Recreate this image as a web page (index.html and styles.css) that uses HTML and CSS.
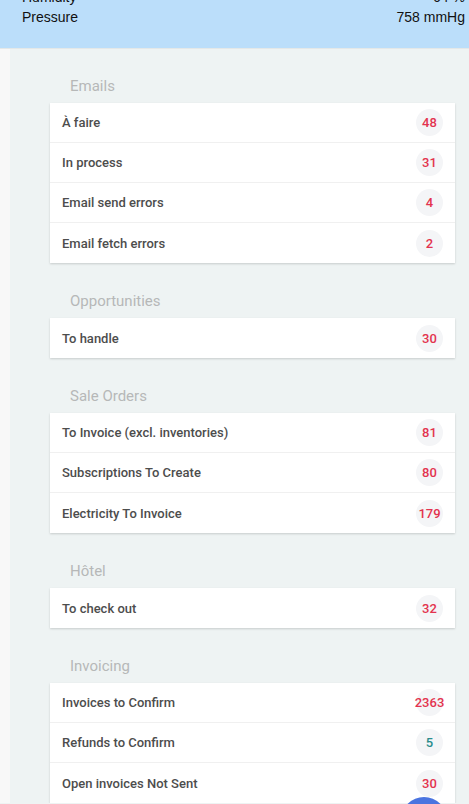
FILE: index.html
```html
<!DOCTYPE html>
<html lang="en">
<head>
  <meta charset="UTF-8" />
  <meta name="viewport" content="width=device-width, initial-scale=1.0" />
  <title>Dashboard</title>
  <link rel="stylesheet" href="styles.css">
</head>
<body>
  <div class="weather">
    <div class="weather-row first"><span>Humidity</span><span>64 %</span></div>
    <div class="weather-row"><span>Pressure</span><span>758 mmHg</span></div>
  </div>

  <div class="page">
    <div class="side"></div>
    <div class="main">
      <div class="section-title">Emails</div>
      <ul class="card">
        <li><span>À faire</span><span class="badge">48</span></li>
        <li><span>In process</span><span class="badge">31</span></li>
        <li><span>Email send errors</span><span class="badge">4</span></li>
        <li><span>Email fetch errors</span><span class="badge">2</span></li>
      </ul>

      <div class="section-title">Opportunities</div>
      <ul class="card">
        <li><span>To handle</span><span class="badge">30</span></li>
      </ul>

      <div class="section-title">Sale Orders</div>
      <ul class="card">
        <li><span>To Invoice (excl. inventories)</span><span class="badge">81</span></li>
        <li><span>Subscriptions To Create</span><span class="badge">80</span></li>
        <li><span>Electricity To Invoice</span><span class="badge">179</span></li>
      </ul>

      <div class="section-title">Hôtel</div>
      <ul class="card">
        <li><span>To check out</span><span class="badge">32</span></li>
      </ul>

      <div class="section-title">Invoicing</div>
      <ul class="card">
        <li><span>Invoices to Confirm</span><span class="badge">2363</span></li>
        <li><span>Refunds to Confirm</span><span class="badge ok">5</span></li>
        <li><span>Open invoices Not Sent</span><span class="badge">30</span></li>
      </ul>
    </div>
  </div>

  <div class="fab"></div>
</body>
</html>
```

FILE: styles.css
```css
* {
  box-sizing: border-box;
}

body {
  margin: 0;
  background: #eef3f3;
  font-family: Roboto, 'Noto Sans', sans-serif;
  overflow: hidden;
}

.weather {
  background: #bbdefa;
  height: 48px;
  padding: 0 4px 0 22px;
  font-family: 'Liberation Sans', Arial, sans-serif;
  font-size: 14px;
  color: #111;
  overflow: hidden;
}

.weather-row {
  display: flex;
  justify-content: space-between;
  line-height: 20px;
}

.weather-row.first {
  margin-top: -13px;
}

.page {
  display: flex;
  border-top: 1px solid #e4e8e8;
}

.side {
  width: 10px;
  background: #f8f8f8;
  flex-shrink: 0;
}

.main {
  flex: 1;
  padding: 0 14px 0 40px;
  margin-top: -1px;
}

.section-title {
  padding: 29px 0 8px 20px;
  line-height: 18px;
  font-size: 15px;
  color: #b6b8b8;
}

.card {
  list-style: none;
  margin: 0;
  padding: 0;
  background: #fff;
  box-shadow: 0 1px 2px rgba(0, 0, 0, 0.16);
}

.card li {
  display: flex;
  justify-content: space-between;
  align-items: center;
  height: 40px;
  padding: 0 12px;
  border-bottom: 1px solid #f0f0f0;
  font-size: 13px;
  font-weight: 500;
  color: #4d4d4d;
}

.card li:last-child {
  border-bottom: none;
}

.badge {
  display: flex;
  align-items: center;
  justify-content: center;
  width: 27px;
  height: 27px;
  border-radius: 50%;
  background: #f4f5f7;
  color: #e3334f;
  font-size: 13px;
  font-weight: 500;
  white-space: nowrap;
}

.badge.ok {
  color: #2a8c8c;
}

.fab {
  position: absolute;
  left: 401px;
  top: 797px;
  width: 46px;
  height: 46px;
  border-radius: 50%;
  background: #4a74e0;
}
```
